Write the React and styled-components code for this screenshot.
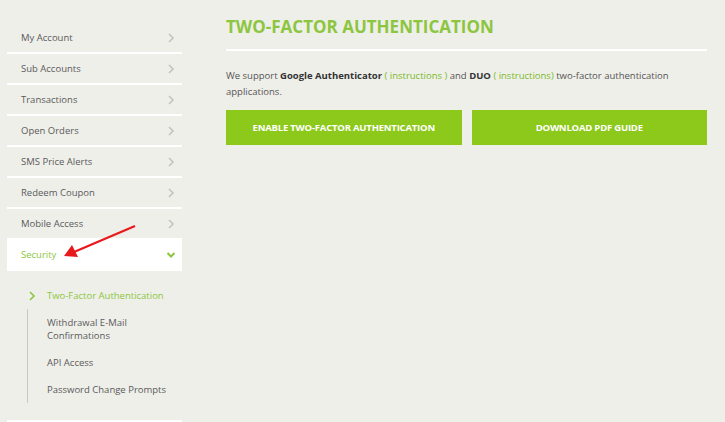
import React from 'react';
import styled, { createGlobalStyle } from 'styled-components';

const Global = createGlobalStyle`
  html, body { margin: 0; padding: 0; background: #efefea; }
  body { font-family: "Open Sans", "Liberation Sans", sans-serif; color: #555; }
`;

const Page = styled.div`
  position: relative;
  display: flex;
  width: 725px;
  height: 422px;
  overflow: hidden;
`;

const Sidebar = styled.nav`
  width: 175px;
  margin-left: 7px;
  padding-top: 23px;
  flex-shrink: 0;
`;

const Row = styled.div`
  height: 29px;
  display: flex;
  align-items: center;
  justify-content: space-between;
  padding: 0 6px 0 14px;
  border-bottom: 2px solid #fff;
  background: ${p => (p.$open ? '#fff' : 'transparent')};
  color: ${p => (p.$open ? '#8cc63f' : '#5a5a5a')};
  font-size: 9.5px;
`;

const Sub = styled.div`
  padding: 18px 0 17px 20px;
  border-bottom: 2px solid #fff;
`;

const SubList = styled.div`
  border-left: 1px solid #c8c8c4;
`;

const SubItem = styled.div`
  font-size: 9.5px;
  line-height: 13px;
  padding: 7px 0 7px 19px;
  color: #5a5a5a;
`;

const Active = styled.div`
  display: flex;
  align-items: center;
  gap: 10px;
  font-size: 9.5px;
  color: #8cc63f;
  line-height: 13px;
  padding-bottom: 7px;
`;

const Main = styled.main`
  flex: 1;
  margin-left: 44px;
  margin-right: 18px;
  padding-top: 15px;
`;

const Title = styled.h1`
  margin: 0;
  font-size: 17px;
  line-height: 24px;
  font-weight: 700;
  color: #8cc63f;
  padding-bottom: 10px;
  border-bottom: 2px solid #fff;
`;

const Text = styled.p`
  margin: 17px 0 10px;
  font-size: 9.5px;
  line-height: 16px;
  color: #555;
  b { color: #333; }
  a { color: #7ab929; text-decoration: none; }
`;

const Buttons = styled.div`
  display: grid;
  grid-template-columns: 1fr 1fr;
  gap: 10px;
`;

const Button = styled.button`
  height: 35px;
  border: 0;
  background: #8cc91a;
  color: #fff;
  font-family: "Open Sans", "Liberation Sans", sans-serif;
  font-weight: 700;
  font-size: 9.5px;
  letter-spacing: -0.2px;
  text-transform: uppercase;
`;

const Arrow = styled.svg`
  position: absolute;
  left: 0;
  top: 0;
  pointer-events: none;
`;

const Chevron = ({ down, color = '#c4c4bf' }) => (
  <svg width="10" height="10" viewBox="0 0 10 10">
    {down
      ? <polyline points="1.5,3 5,6.5 8.5,3" fill="none" stroke={color} strokeWidth="2" />
      : <polyline points="3,1 7,5 3,9" fill="none" stroke={color} strokeWidth="1.6" />}
  </svg>
);

const items = ['My Account', 'Sub Accounts', 'Transactions', 'Open Orders', 'SMS Price Alerts', 'Redeem Coupon', 'Mobile Access'];

export default function App() {
  return (
    <Page>
      <Global />
      <Sidebar>
        {items.map(t => (
          <Row key={t}>{t}<Chevron /></Row>
        ))}
        <Row $open>Security<Chevron down color="#8cc63f" /></Row>
        <Sub>
          <Active>
            <Chevron color="#8cc63f" />
            <span>Two-Factor Authentication</span>
          </Active>
          <SubList>
            <SubItem>Withdrawal E-Mail<br />Confirmations</SubItem>
            <SubItem>API Access</SubItem>
            <SubItem>Password Change Prompts</SubItem>
          </SubList>
        </Sub>
      </Sidebar>
      <Main>
        <Title>TWO-FACTOR AUTHENTICATION</Title>
        <Text>
          We support <b>Google Authenticator</b> <a href="#">( instructions )</a> and <b>DUO</b> <a href="#">( instructions)</a> two-factor authentication applications.
        </Text>
        <Buttons>
          <Button>Enable two-factor authentication</Button>
          <Button>Download PDF guide</Button>
        </Buttons>
      </Main>
      <Arrow width="725" height="422">
        <line x1="135" y1="226" x2="74" y2="252" stroke="#e8191c" strokeWidth="2.2" />
        <polygon points="64,256 72,245 78,257" fill="#e8191c" />
      </Arrow>
    </Page>
  );
}
